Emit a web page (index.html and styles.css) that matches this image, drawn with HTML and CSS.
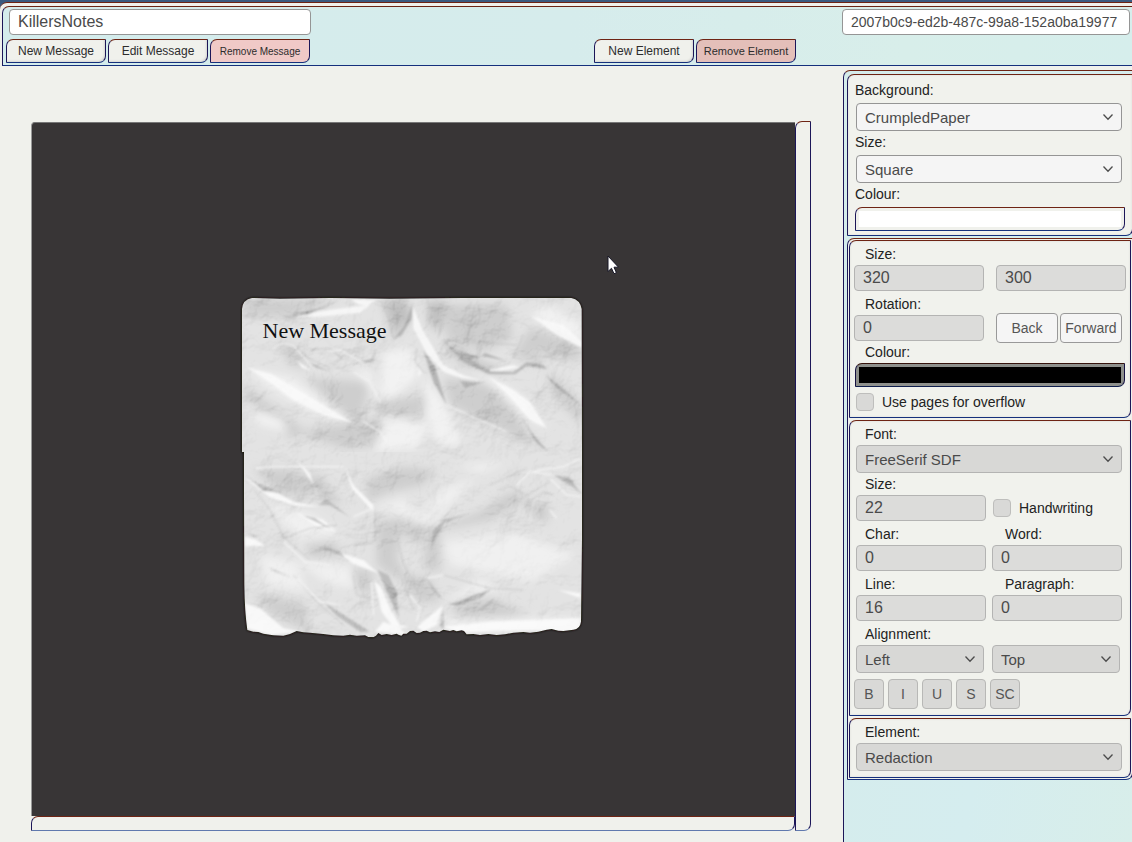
FILE: index.html
```html
<!DOCTYPE html>
<html lang="en">
<head>
<meta charset="utf-8">
<meta name="viewport" content="width=device-width, initial-scale=1">
<title>KillersNotes</title>
<link rel="stylesheet" href="styles.css">
</head>
<body>
<svg class="defs" aria-hidden="true">
  <symbol id="chevron" viewBox="0 0 12 8"><path d="M1.5 1.5 6 6.2 10.5 1.5" fill="none" stroke="#4c4c4c" stroke-width="1.3"/></symbol>
</svg>
<div class="window">
  <header class="toolbar">
    <div class="toolbar-left">
      <div class="message-tools">
        <input class="field name-field" type="text" aria-label="Name" value="KillersNotes">
        <div class="button-row">
          <button class="bevel tab">New Message</button>
          <button class="bevel tab">Edit Message</button>
          <button class="bevel tab remove-message">Remove Message</button>
        </div>
      </div>
      <div class="button-row">
        <button class="bevel tab">New Element</button>
        <button class="bevel tab remove-element">Remove Element</button>
      </div>
    </div>
    <input class="field id-field" type="text" aria-label="Identifier" value="2007b0c9-ed2b-487c-99a8-152a0ba19977">
  </header>

  <div class="workspace">
    <main class="stage">
      <div class="canvas">
        <div class="paper">
          <svg class="paper-art" viewBox="30 30 1035 1035" aria-hidden="true">
            <defs>
              <filter id="soft" x="-30%" y="-30%" width="160%" height="160%"><feGaussianBlur stdDeviation="13"/></filter>
              <filter id="fine" x="-10%" y="-10%" width="120%" height="120%"><feGaussianBlur stdDeviation="3"/></filter>
              <filter id="shadow" x="-5%" y="-5%" width="110%" height="110%"><feGaussianBlur stdDeviation="3"/></filter>
              <filter id="relief" x="0" y="0" width="100%" height="100%" color-interpolation-filters="sRGB">
                <feTurbulence type="fractalNoise" baseFrequency=".007" numOctaves="5" seed="11"/>
                <feDiffuseLighting surfaceScale="46" diffuseConstant="1.15" lighting-color="#fff"><feDistantLight azimuth="235" elevation="58"/></feDiffuseLighting>
              </filter>
              <path id="sheet" d="M36 72Q38 44 66 39L150 41 300 39 480 41 700 39 1024 39Q1050 44 1055 72L1056 500 1056 760 1053 1010Q1050 1032 1030 1034L1000 1038 985 1037 965 1032 950 1034 925 1040 900 1043 880 1041 850 1043 825 1048 800 1050 775 1047 750 1050 730 1047 710 1048 702 1038 695 1036 680 1039 670 1035 660 1038 640 1034 628 1041 615 1039 600 1042 590 1037 580 1038 570 1043 560 1044 550 1037 540 1038 530 1046 520 1046 514 1052 505 1049 500 1046 485 1050 470 1047 455 1050 445 1044 438 1052 430 1057 415 1056 405 1051 380 1052 360 1049 340 1052 310 1051 280 1047 240 1043 220 1042 200 1038 180 1047 160 1052 130 1051 100 1046 85 1041 70 1040 52 1035Q44 980 43 900L42 620 42 501 36 501Z"/>
              <clipPath id="sheetClip"><use href="#sheet"/></clipPath>
              <clipPath id="topHalf"><rect x="30" y="30" width="1035" height="471"/></clipPath>
              <clipPath id="bottomHalf"><rect x="30" y="21" width="1035" height="580"/></clipPath>
            </defs>
            <use href="#sheet" fill="#151208" stroke="#151208" stroke-width="3" filter="url(#shadow)"/>
            <g clip-path="url(#sheetClip)">
              <rect x="30" y="30" width="1035" height="1035" fill="#dcdcdc"/>
              <g clip-path="url(#topHalf)">
                <g filter="url(#soft)">
                  <path fill="#c3c3c3" d="M40 40 330 45 180 95 40 95ZM40 300 230 440 180 460 40 330ZM230 280 420 290 390 420 300 350ZM440 350 600 330 570 400 450 390ZM640 60 830 60 850 160 760 200 650 160ZM850 210 950 250 900 200 1050 230 1050 170 900 130ZM640 280 800 300 910 470 950 500 820 440 660 360ZM200 440 440 400 480 480 340 490ZM140 170 190 180 240 250 180 240ZM960 260 1056 360 1056 420 960 320Z"/>
                  <path fill="#efefef" d="M50 250 190 280 360 410 240 380 120 310ZM460 200 540 190 570 270 500 330 450 350ZM580 270 640 350 700 480 620 480 590 390ZM660 190 760 260 900 350 950 430 880 390 780 300ZM900 90 1056 180 1056 120 950 60ZM60 370 150 400 180 440 90 420ZM380 240 430 270 440 340 390 270ZM470 390 600 420 560 490 430 500Z"/>
                  <path fill="#b1b1b1" d="M455 45 530 45 545 95 490 160 480 110ZM590 50 650 50 630 140 600 120ZM635 165 750 230 840 265 780 265 690 230Z"/>
                </g>
                <g filter="url(#fine)" opacity=".85">
                  <path fill="#f9f9f9" d="M360 43 440 45 410 62 385 58ZM180 94 290 76 420 60 390 83 260 96ZM548 60 575 130 640 240 700 270 765 289 690 278 640 260 590 205 550 130ZM905 94 1000 120 1056 170 1056 188 980 150ZM775 275 850 315 900 352 950 430 900 405 840 335ZM50 247 125 268 230 330 370 415 280 390 190 345 120 292ZM780 253 850 240 870 247 780 265ZM200 225 245 258 215 248ZM565 250 575 262 565 275Z"/>
                  <path fill="#9c9c9c" d="M548 55 545 100 515 150 490 163 520 125ZM638 165 680 200 750 215 765 204 830 228 760 214 720 222 780 258 850 262 890 232 940 240 952 253 890 242 855 268 775 266 700 230ZM580 195 615 245 650 360 610 290ZM944 268 1010 320 1056 365 1030 345 980 308ZM232 230 298 258 260 248ZM440 185 425 223 360 240 428 229ZM640 95 622 165 632 140ZM155 96 235 88 335 43 260 72ZM690 288 740 293 770 288 735 300 705 308ZM870 390 910 450 955 500 920 475Z"/>
                  <path fill="none" stroke="#b4b4b4" stroke-width="3" d="M455 50 475 95 490 160M190 180 235 220 300 250M590 40 600 70 590 100M240 195 300 190 340 225M900 350 950 305M560 190 555 230 580 260M640 165 860 180M850 220 880 150"/>
                  <path fill="none" stroke="#f3f3f3" stroke-width="4" d="M130 190 160 175 190 180 245 245M300 200 330 195 400 235M450 350 420 290 370 260M500 285 508 270M650 360 760 410 830 440M475 475 450 440 400 410"/>
                </g>
              </g>
              <g transform="translate(0 480)" clip-path="url(#bottomHalf)">
                <g filter="url(#soft)">
                  <path fill="#c3c3c3" d="M70 70 200 75 250 150 150 150ZM410 100 520 65 620 75 580 120 480 140 410 170ZM620 250 750 200 840 140 900 160 780 225 660 250ZM440 230 520 220 500 340 540 420 500 400 440 360ZM590 260 630 250 630 380 580 370ZM520 390 600 400 630 470 560 470ZM230 300 310 290 340 330 240 340ZM70 450 220 470 240 560 130 510ZM360 370 430 380 420 450 380 430ZM660 490 780 460 900 510 690 525ZM880 180 960 180 950 240ZM170 100 270 90 340 180 290 170ZM500 220 600 215 570 290 530 280Z"/>
                  <path fill="#ececec" d="M430 190 520 160 570 210 640 130 740 100 660 180 600 240 540 230 490 200ZM100 170 250 210 340 270 200 280ZM640 290 850 260 1040 330 900 410 660 360ZM90 330 200 350 230 440 110 420ZM200 350 360 360 380 430 300 420ZM640 520 1040 520 1040 550 640 560ZM640 470 750 400 820 430ZM680 60 840 50 750 85Z"/>
                </g>
                <g filter="url(#fine)" opacity=".85">
                  <path fill="#fcfcfc" d="M45 100 110 125 190 170 270 185 200 184 120 157ZM200 205 280 225 320 263 260 242ZM320 320 400 345 445 385 370 356ZM432 405 455 430 480 490 510 540 535 545 495 555 455 500ZM45 475 90 490 160 550 210 560 120 570 50 550ZM560 545 640 480 620 540 580 560ZM640 545 780 530 1052 520 1050 560 900 555 690 562ZM45 275 80 285 105 302 45 304ZM200 45 240 85 267 170 255 125ZM460 530 510 550 530 570 435 560ZM985 435 1052 460 1052 445ZM345 62 370 120 430 180 430 200 365 130Z"/>
                  <path fill="#a8a8a8" d="M45 90 75 112 160 145 100 138ZM970 90 1020 98 1052 145 1020 120ZM215 210 255 220 308 255 270 236ZM48 263 80 272 98 268 75 277ZM230 330 285 303 330 320 345 335 280 312ZM442 374 475 390 500 440 505 515 475 450ZM650 472 670 475 785 432 750 459 680 484ZM610 260 640 225 720 205 640 235 600 320ZM265 180 290 162 360 217 300 180ZM280 470 420 560 390 560 320 512ZM640 500 640 550 630 545ZM590 400 640 465 610 440ZM115 368 185 396 135 380Z"/>
                  <path fill="none" stroke="#bababa" stroke-width="3" d="M75 138 120 195 160 275 240 345M160 280 240 250 320 240M435 195 435 290M370 300 430 295M540 390 525 430 550 490M190 390 260 470 340 540M830 120 890 150 960 110M640 390 780 430 880 435M880 180 940 140 970 150M495 240 510 320 535 390M780 120 890 70M370 390 380 450 425 460"/>
                  <path fill="none" stroke="#f2f2f2" stroke-width="5" d="M75 70 130 65 340 65M430 190 370 215M860 120 900 80 1000 65 1052 40M960 100 1010 150 1052 155M160 290 230 355M220 350 300 360M960 195 980 220M900 80 970 90M200 400 270 470 330 480M425 410 430 510M540 450 570 490 560 530M590 400 640 390"/>
                </g>
              </g>
              <rect class="relief" x="30" y="30" width="1035" height="1035" filter="url(#relief)"/>
            </g>
          </svg>
          <p class="paper-text">New Message</p>
        </div>
        <svg class="pointer" viewBox="0 0 12 20" aria-hidden="true"><path d="M1 1V16.5L4.5 13.3 7 18.7 9.4 17.7 7 12.2H11.5Z" fill="#fff" stroke="#161626" stroke-width="1"/></svg>
      </div>
      <div class="bevel scroll-x"></div>
      <div class="bevel scroll-y"></div>
    </main>

    <aside class="sidebar">
      <section class="bevel panel background-panel">
        <label for="background">Background:</label>
        <div class="select"><select id="background"><option>CrumpledPaper</option></select><svg><use href="#chevron"/></svg></div>
        <label for="paper-size">Size:</label>
        <div class="select"><select id="paper-size"><option>Square</option></select><svg><use href="#chevron"/></svg></div>
        <label for="paper-colour">Colour:</label>
        <input class="bevel swatch" id="paper-colour" type="color" value="#ffffff">
      </section>

      <div class="bevel panel-group">
        <section class="bevel panel shape-panel muted">
          <label for="width">Size:</label>
          <div class="pair">
            <input class="field" id="width" type="text" value="320">
            <input class="field" type="text" aria-label="Height" value="300">
          </div>
          <label for="rotation">Rotation:</label>
          <div class="pair">
            <input class="field" id="rotation" type="text" value="0">
            <div class="order-buttons">
              <button class="plain">Back</button>
              <button class="plain">Forward</button>
            </div>
          </div>
          <label class="tight" for="element-colour">Colour:</label>
          <input class="bevel swatch dark" id="element-colour" type="color" value="#000000">
          <label class="check"><input type="checkbox">Use pages for overflow</label>
        </section>

        <section class="bevel panel text-panel muted">
          <label for="font">Font:</label>
          <div class="select"><select id="font"><option>FreeSerif SDF</option></select><svg><use href="#chevron"/></svg></div>
          <label class="tight" for="font-size">Size:</label>
          <div class="pair">
            <input class="field" id="font-size" type="text" value="22">
            <label class="check"><input type="checkbox">Handwriting</label>
          </div>
          <div class="pair labels"><label for="char">Char:</label><label for="word">Word:</label></div>
          <div class="pair">
            <input class="field" id="char" type="text" value="0">
            <input class="field" id="word" type="text" value="0">
          </div>
          <div class="pair labels"><label for="line">Line:</label><label for="paragraph">Paragraph:</label></div>
          <div class="pair">
            <input class="field" id="line" type="text" value="16">
            <input class="field" id="paragraph" type="text" value="0">
          </div>
          <label for="align">Alignment:</label>
          <div class="pair aligns">
            <div class="select"><select id="align"><option>Left</option></select><svg><use href="#chevron"/></svg></div>
            <div class="select"><select aria-label="Vertical alignment"><option>Top</option></select><svg><use href="#chevron"/></svg></div>
          </div>
          <div class="styles">
            <button class="plain">B</button>
            <button class="plain">I</button>
            <button class="plain">U</button>
            <button class="plain">S</button>
            <button class="plain">SC</button>
          </div>
        </section>

        <section class="bevel panel muted">
          <label for="element">Element:</label>
          <div class="select"><select id="element"><option>Redaction</option></select><svg><use href="#chevron"/></svg></div>
        </section>
      </div>
    </aside>
  </div>
</div>
</body>
</html>
```
FILE: styles.css
```css
* { box-sizing: border-box; }

body {
  margin: 0;
  padding-top: 2px;
  background: #3a5a80;
  color: #222;
  font: 14px "Liberation Sans", Arial, sans-serif;
  overflow: hidden;
}

.defs { position: absolute; width: 0; height: 0; }

.bevel {
  border: 1px solid;
  border-color: #6e2414 #1c1658 #15307c #1c1658;
  border-radius: 7px 0 7px 0;
  background: #f0f1ec;
}

.window {
  display: flex;
  flex-direction: column;
  min-height: calc(100vh - 2px);
  border-top: 1px solid #6e2414;
  border-radius: 7px 0 0 0;
  background: #f0f1ec;
}

.toolbar {
  display: grid;
  grid-template-columns: 1fr 288px;
  gap: 46px;
  margin: 3px 0 0 2px;
  padding: 2px 2px 2px 3px;
  border: solid;
  border-width: 1px 0 1px 1px;
  border-color: #6e2414 #1c1658 #15307c #1c1658;
  border-radius: 7px 0 0 0;
  background: linear-gradient(90deg, #d4ecec, #d6ecec 50%, #d8eeea 80%, #d6eeec);
}

.toolbar-left { display: flex; justify-content: space-between; align-items: flex-end; }
.message-tools { display: grid; gap: 4px; }
.button-row { display: flex; gap: 2px; }

input, select, button { font-family: inherit; margin: 0; }

.field {
  width: 100%;
  min-width: 0;
  height: 26px;
  padding: 0 8px;
  border: 1px solid #959595;
  border-radius: 4px;
  background: #fff;
  color: #4a4a4a;
  font-size: 16px;
}

.name-field { width: 302px; margin-left: 3px; }
.id-field { font-size: 14px; }

.tab {
  width: 100px;
  height: 24px;
  padding: 0;
  color: #2c2c2c;
  font-size: 12px;
  box-shadow: inset -1px -1px 2px #d5d6d2;
}

.remove-message { background: #f0c9c7; box-shadow: none; font-size: 10px; }
.remove-element { background: #e4bfb9; box-shadow: none; font-size: 11px; }

.workspace {
  display: grid;
  grid-template-columns: 1fr 289px;
  flex: 1;
  padding-top: 4px;
}

.stage {
  display: grid;
  grid-template-columns: 1fr 16px;
  grid-template-rows: 1fr 15px;
  padding: 51px 32px 11px 31px;
}

.canvas {
  position: relative;
  display: flex;
  align-items: center;
  justify-content: center;
  margin-top: 1px;
  padding: 0 3px 4px 0;
  border-top: 1px solid #777;
  border-left: 1px solid #999;
  border-radius: 4px 0 0 0;
  background: #383536;
}

.paper { position: relative; width: 345px; }
.paper-art { display: block; width: 100%; }
.relief { mix-blend-mode: soft-light; opacity: .4; }

.paper-text {
  position: absolute;
  top: 23px;
  left: 23px;
  margin: 0;
  color: #111;
  font: 22px/25px "Liberation Serif", "Times New Roman", serif;
}

.pointer { position: absolute; left: 575px; top: 132px; width: 12px; height: 20px; }

.scroll-x { border-bottom-color: #6079ae; }
.scroll-y { grid-column: 2; grid-row: 1 / 3; border-bottom-color: #6079ae; }

.sidebar {
  padding: 3px 0 0 3px;
  border: solid;
  border-width: 1px 0 0 1px;
  border-color: #6e2414 #1c1658 #15307c #1c1658;
  border-radius: 7px 0 0 0;
  background: linear-gradient(100deg, #d5eceb, #d5edef 60%, #d8eeea);
}

.panel {
  display: grid;
  gap: 2px;
  padding: 2px 8px 6px 6px;
  background: #f1f2ed;
  box-shadow: inset 0 0 2px #d8d9d6;
}

.panel > label, .labels label { padding: 2px 0 0 9px; line-height: 18px; }
.panel > .tight { padding-top: 0; }

.panel.background-panel { margin-right: -1px; padding: 6px 10px 4px 7px; }
.background-panel > label { padding: 0 0 2px; }
.background-panel .select { margin-left: 1px; }
.background-panel .swatch { width: calc(100% + 3px); }

.panel-group {
  display: grid;
  gap: 2px;
  margin: 2px -1px 0 0;
  padding: 1px;
}

.select { position: relative; }

.select select {
  display: block;
  width: 100%;
  height: 28px;
  padding: 0 24px 0 8px;
  appearance: none;
  border: 1px solid #959595;
  border-radius: 4px;
  background: #f5f5f5;
  color: #4a4a4a;
  font-size: 15px;
}

.select svg {
  position: absolute;
  top: 10px;
  right: 8px;
  width: 12px;
  height: 8px;
  pointer-events: none;
}

.swatch {
  height: 24px;
  padding: 3px;
  appearance: none;
}

.swatch::-webkit-color-swatch-wrapper { padding: 0; }
.swatch::-webkit-color-swatch { border: 0; border-radius: 0; }
.dark { background: #8e908c; border-color: #35130c #141040 #0d1c4c #141040; }

.muted .field, .muted select {
  border-color: #b4b4b3;
  background: #dcdcda;
}

.muted select { background: #d8d8d6; }

.pair {
  display: grid;
  grid-template-columns: 1fr 1fr;
  align-items: center;
  gap: 6px;
}

.shape-panel { padding: 2px 4px 6px; }
.shape-panel > label:not(.check) { padding-left: 11px; }
.shape-panel .pair { gap: 12px; grid-template-rows: 26px; }
.shape-panel .swatch { justify-self: center; width: calc(100% - 2px); }

.order-buttons {
  display: grid;
  grid-template-columns: 1fr 1fr;
  gap: 2px;
  margin: -2px 4px -2px 0;
}

.plain {
  height: 30px;
  padding: 0;
  border: 1px solid #999;
  border-radius: 4px;
  background: #f5f5f5;
  color: #555;
  font-size: 14px;
}

.check { display: flex; align-items: center; gap: 8px; }
.panel > .check { margin-top: 4px; padding: 0 0 0 2px; }
.pair .check { padding-left: 1px; }

.check input {
  width: 18px;
  height: 18px;
  appearance: none;
  border: 1px solid #bebebc;
  border-radius: 4px;
  background: #d9d9d7;
}

.labels label:last-child { padding-left: 13px; }
.aligns { margin-right: 2px; gap: 8px; }

.styles { display: flex; gap: 4px; margin: 4px 0 0 -2px; }
.styles .plain { width: 30px; border-color: #b8b8b6; background: #d9d9d7; }
```
